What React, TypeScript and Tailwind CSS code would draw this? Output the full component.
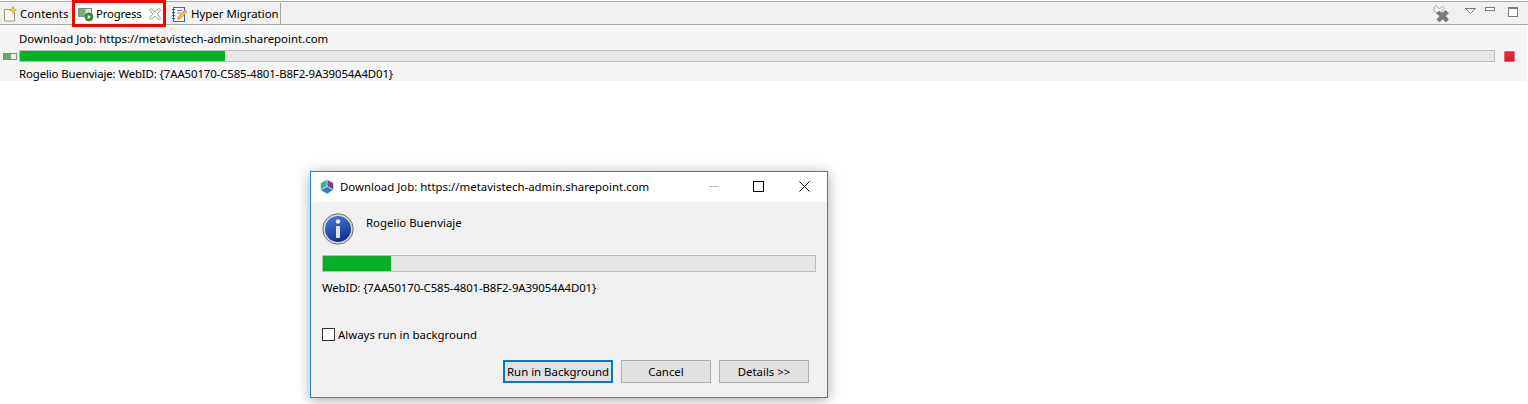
const font = { fontFamily: '"Noto Sans", sans-serif' }

function ContentsIcon() {
  return (
    <svg width="16" height="16" viewBox="0 0 16 16" className="shrink-0">
      <path d="M2.500 3.500h7l3 3v8.500h-10z" fill="#fdfdf8" stroke="#9a9a8c" />
      <path d="M11 0.500l1 2.500 2.500 1-2.500 1-1 2.500-1-2.500-2.500-1 2.500-1z" fill="#f5d060" stroke="#c49a2c" strokeWidth="0.7" />
    </svg>
  )
}

function ProgressIcon() {
  return (
    <svg width="16" height="16" viewBox="0 0 16 16" className="shrink-0">
      <rect x="0.500" y="2.500" width="13" height="8" fill="#dfe5dc" stroke="#7d8b84" />
      <rect x="1" y="3" width="6.500" height="7" fill="#7fae78" />
      <circle cx="11" cy="11" r="3.900" fill="#2f9a3e" stroke="#1f6f2b" strokeWidth="0.8" />
      <path d="M9.800 9.100l3 1.900-3 1.900z" fill="#fff" />
    </svg>
  )
}

function CloseTabIcon() {
  return (
    <svg width="12" height="12" viewBox="0 0 13 13">
      <path d="M0.500 2l1.500-1.500 4.500 3.500 4.500-3.500 1.500 1.500-3.500 4.500 3.500 4.500-1.500 1.500-4.500-3.500-4.500 3.500-1.500-1.500 3.500-4.500z" fill="#fff" stroke="#8d8d8d" />
    </svg>
  )
}

function MigrationIcon() {
  return (
    <svg width="17" height="17" viewBox="0 0 17 17" className="shrink-0">
      <rect x="2.500" y="1.500" width="11" height="14" fill="#fdfdfd" stroke="#2a6cb5" />
      <path d="M1 3.500h3M1 6.500h3M1 9.500h3M1 12.500h3" stroke="#1f5ea8" strokeWidth="1.200" />
      <path d="M6 4.500h5M6 7h4" stroke="#5a8ac0" />
      <path d="M6.500 13.500l1-3 6.500-6.500 2 2-6.500 6.500z" fill="#f2bb55" stroke="#c98d2b" strokeWidth="0.700" />
    </svg>
  )
}

function RemoveAllIcon() {
  return (
    <svg width="17" height="17" viewBox="0 0 17 17">
      <path d="M1 2.500l2-2 3.500 3.500 3-3 2 2-3 3 1 1-3 3-2-2-1 0-3-3.500 1.500-1.500z" fill="#f2f2f2" stroke="#a8a8a8" />
      <path d="M3.500 8.500l2.500-2.500 3 2.500 3.500-3 3 2.500-3 3 3 3.500-2.500 2.500-3.500-3-3 3-2.500-2.500 3-3.500z" fill="#7b7b7b" stroke="#6b6b6b" strokeWidth="0.600" />
    </svg>
  )
}

function ViewMenuIcons() {
  return (
    <div className="flex items-start">
      <svg width="11" height="6" viewBox="0 0 11 6" className="mt-[6px]">
        <path d="M0.500 0.500h10l-5 5z" fill="#fff" stroke="#7a7a7a" />
      </svg>
      <div className="mt-[5px] ml-[9px] w-[10px] h-[4px] border border-[#7a7a7a] bg-white" />
      <div className="mt-[5px] ml-[13px] w-[10px] h-[10px] border border-[#7a7a7a] border-t-[2px] bg-white" />
    </div>
  )
}

function Bar({ className, pct }: { className: string; pct: number }) {
  return (
    <div className={`${className} bg-[#e6e6e6] border border-[#bcbcbc]`}>
      <div className="h-full bg-[#06b025]" style={{ width: `${pct}%` }} />
    </div>
  )
}

function Btn({ label, focus }: { label: string; focus?: boolean }) {
  return (
    <div
      className={
        focus
          ? 'w-[110px] h-[23px] flex items-center justify-center whitespace-nowrap bg-[#e1e1e1] border-2 border-[#0078d7]'
          : 'w-[90px] h-[23px] flex items-center justify-center whitespace-nowrap bg-[#e1e1e1] border border-[#adadad]'
      }
    >
      {label}
    </div>
  )
}

export default function App() {
  return (
    <div className="relative w-[1528px] h-[404px] bg-white overflow-hidden text-[11.42px] text-black leading-none" style={font}>
      <div className="mt-[1px] h-[24px] bg-[#f0f0f0] border-t border-b border-[#a9a9a9] flex items-start justify-between">
        <div className="flex h-[27px] -mt-[2px] relative">
          <div className="w-[72px] h-[22px] mt-[3px] pl-[2px] flex items-center gap-[2px] shrink-0">
            <ContentsIcon />
            <span>Contents</span>
          </div>
          <div className="w-[94px] h-[27px] pl-[3px] flex items-center gap-[2px] bg-white border-[3px] border-[#ff0000] shrink-0">
            <ProgressIcon />
            <span className="tracking-[-0.2px]">Progress</span>
            <span className="ml-[5px] flex"><CloseTabIcon /></span>
          </div>
          <div className="w-[115px] h-[22px] mt-[3px] pl-[5px] flex items-center gap-[3px] border-r border-[#a6a6a6] shrink-0">
            <MigrationIcon />
            <span>Hyper Migration</span>
          </div>
        </div>
        <div className="flex items-start pr-[10px] gap-[15px]">
          <div className="mt-[3px] flex"><RemoveAllIcon /></div>
          <ViewMenuIcons />
        </div>
      </div>

      <div className="h-[56px] bg-[#f5f5f5] w-[1527px] pt-[7px]">
        <div className="pl-[19px] h-[13px] flex items-center">Download Job: https://metavistech-admin.sharepoint.com</div>
        <div className="flex items-center h-[12px] mt-[5px] pl-[3px]">
          <div className="w-[14px] h-[7px] border border-[#7d8b84] bg-[#e8efe8] mr-[2px]">
            <div className="w-[7px] h-full bg-[#6fa86a]" />
          </div>
          <Bar className="w-[1476px] h-[12px]" pct={13.9} />
          <div className="ml-[9px] w-[11px] h-[11px] bg-gradient-to-b from-[#e62e3a] to-[#d81e2a] border border-[#e0656d] rounded-[1px]" />
        </div>
        <div className="pl-[19px] h-[13px] mt-[5px] flex items-center tracking-[-0.12px]">Rogelio Buenviaje: WebID: {'{'}7AA50170-C585-4801-B8F2-9A39054A4D01{'}'}</div>
      </div>

      {/* dialog window */}
      <div className="absolute left-[310px] top-[171px] w-[518px] h-[227px] border border-[#2b83d4] bg-[#f0f0f0] shadow-[0_2px_12px_rgba(0,0,0,0.35)] flex flex-col">
        <div className="h-[30px] bg-white flex items-center pl-[8px] shrink-0">
          <svg width="16" height="16" viewBox="0 0 16 16" className="shrink-0">
            <path d="M8 0.500l6.500 3.500v7L8 7.500z" fill="#7b3f98" stroke="#fff" strokeWidth="0.500" />
            <path d="M1.500 4L8 0.500v7L1.500 11z" fill="#3fae9a" stroke="#fff" strokeWidth="0.500" />
            <path d="M1.500 11L8 7.500l6.500 3.500L8 15z" fill="#2f7fc1" stroke="#fff" strokeWidth="0.500" />
          </svg>
          <span className="ml-[5px]">Download Job: https://metavistech-admin.sharepoint.com</span>
          <div className="ml-auto flex items-center pr-[17px] -mt-[2px]">
            <div className="w-[10px] h-px bg-[#bdbdbd]" />
            <div className="ml-[34px] w-[11px] h-[11px] border border-black" />
            <svg width="11" height="11" viewBox="0 0 11 11" className="ml-[35px]">
              <path d="M0.500 0.500l10 10M10.500 0.500l-10 10" stroke="#000" />
            </svg>
          </div>
        </div>

        <div className="flex-1 flex flex-col pl-[11px] pr-[11px]">
          <div className="flex h-[42px] mt-[11px] shrink-0">
            <svg width="32" height="32" viewBox="0 0 32 32" className="shrink-0">
              <defs>
                <linearGradient id="ib" x1="0" y1="0" x2="0.4" y2="1">
                  <stop offset="0" stopColor="#4f7fd8" />
                  <stop offset="1" stopColor="#14358f" />
                </linearGradient>
              </defs>
              <circle cx="16" cy="16" r="15.200" fill="#d9d9d9" stroke="#6e6e6e" />
              <circle cx="16" cy="16" r="13" fill="url(#ib)" />
              <circle cx="16" cy="8.500" r="2.200" fill="#eef2fb" />
              <rect x="14" y="13" width="4" height="12" rx="1" fill="#dfe4ee" />
            </svg>
            <span className="ml-[12px] mt-[3px] h-[13px] flex items-center">Rogelio Buenviaje</span>
          </div>
          <Bar className="w-[494px] h-[17px]" pct={13.9} />
          <div className="mt-[9px] h-[13px] flex items-center tracking-[-0.13px]">WebID: {'{'}7AA50170-C585-4801-B8F2-9A39054A4D01{'}'}</div>
          <div className="mt-[34px] flex items-center h-[13px]">
            <div className="w-[13px] h-[13px] border border-[#333] bg-white" />
            <span className="ml-[3px]">Always run in background</span>
          </div>
          <div className="mt-[19px] flex justify-end gap-[8px] pr-[7px]">
            <Btn label="Run in Background" focus />
            <Btn label="Cancel" />
            <Btn label="Details >>" />
          </div>
        </div>
      </div>
    </div>
  )
}
